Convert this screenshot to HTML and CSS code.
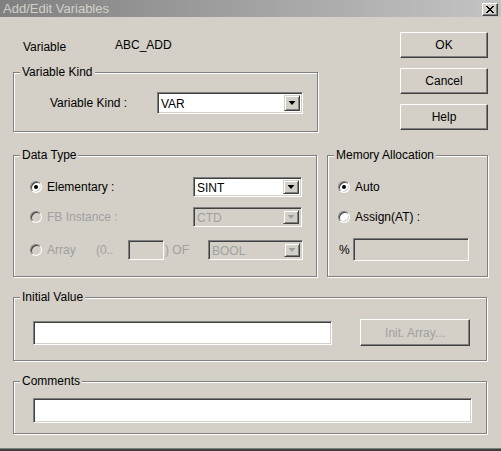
FILE: index.html
```html
<!DOCTYPE html>
<html>
<head>
<meta charset="utf-8">
<link rel="stylesheet" href="styles.css">
</head>
<body>
<div class="window">
  <div class="titlebar">
    <span class="title">Add/Edit Variables</span>
    <span class="close-btn">
      <svg width="8" height="7" viewBox="0 0 8 7" shape-rendering="crispEdges">
        <rect x="0" y="0" width="2" height="1"/><rect x="6" y="0" width="2" height="1"/>
        <rect x="1" y="1" width="2" height="1"/><rect x="5" y="1" width="2" height="1"/>
        <rect x="2" y="2" width="4" height="1"/>
        <rect x="3" y="3" width="2" height="1"/>
        <rect x="2" y="4" width="4" height="1"/>
        <rect x="1" y="5" width="2" height="1"/><rect x="5" y="5" width="2" height="1"/>
        <rect x="0" y="6" width="2" height="1"/><rect x="6" y="6" width="2" height="1"/>
      </svg>
    </span>
  </div>
  <div class="content">
    <div class="top">
      <div class="top-left">
        <div class="var-row">
          <span class="var-label">Variable</span>
          <span class="var-name">ABC_ADD</span>
        </div>
        <div class="group kind">
          <div class="legend">Variable Kind</div>
          <div class="kind-row">
            <span class="kind-label">Variable Kind :</span>
            <div class="combo w-kind"><span class="combo-text">VAR</span><span class="combo-btn"><span class="arrow"></span></span></div>
          </div>
        </div>
      </div>
      <div class="buttons">
        <button class="btn">OK</button>
        <button class="btn">Cancel</button>
        <button class="btn">Help</button>
      </div>
    </div>

    <div class="mid">
      <div class="group dtype">
        <div class="legend">Data Type</div>
        <div class="opt-row r1">
          <span class="radio checked"><span class="dot"></span></span>
          <span class="opt-label">Elementary :</span>
          <div class="combo w-dt"><span class="combo-text">SINT</span><span class="combo-btn"><span class="arrow"></span></span></div>
        </div>
        <div class="opt-row r2 disabled">
          <span class="radio"></span>
          <span class="opt-label">FB Instance :</span>
          <div class="combo w-dt off"><span class="combo-text">CTD</span><span class="combo-btn"><span class="arrow"></span></span></div>
        </div>
        <div class="opt-row r3 disabled">
          <span class="radio"></span>
          <span class="arr-label">Array</span>
          <span class="arr-open">(0..</span>
          <span class="field off small"></span>
          <span class="arr-of">) OF</span>
          <div class="combo w-bool off"><span class="combo-text">BOOL</span><span class="combo-btn"><span class="arrow"></span></span></div>
        </div>
      </div>
      <div class="group mem">
        <div class="legend">Memory Allocation</div>
        <div class="opt-row r1">
          <span class="radio checked"><span class="dot"></span></span>
          <span>Auto</span>
        </div>
        <div class="opt-row r2">
          <span class="radio"></span>
          <span>Assign(AT) :</span>
        </div>
        <div class="pct-row">
          <span class="pct">%</span>
          <span class="field off pct-field"></span>
        </div>
      </div>
    </div>

    <div class="group init">
      <div class="legend">Initial Value</div>
      <div class="init-row">
        <span class="field init-field"></span>
        <button class="btn btn-off">Init. Array...</button>
      </div>
    </div>

    <div class="group comments">
      <div class="legend">Comments</div>
      <div class="comments-row">
        <span class="field comments-field"></span>
      </div>
    </div>
  </div>
</div>
</body>
</html>
```

FILE: styles.css
```css
* { box-sizing: border-box; }

body {
  margin: 0;
  background: #d4d0c8;
  font-family: "Liberation Sans", Arial, sans-serif;
  font-size: 12px;
  line-height: 14px;
  color: #000;
}

.window {
  width: 501px;
  height: 451px;
  background: #d4d0c8;
  box-shadow: inset 0 -2px #404040, inset 0 -3px #808080;
}

.titlebar {
  height: 17px;
  background: linear-gradient(to right, #808080, #c4c4c4);
  display: flex;
  justify-content: space-between;
  align-items: flex-start;
  padding: 0 3px 0 3px;
}

.title {
  color: #d4d0c8;
  font-size: 13px;
  line-height: 17px;
}

.close-btn {
  margin-top: 3px;
  width: 16px;
  height: 13px;
  background: #d4d0c8;
  border: 1px solid;
  border-color: #fff #404040 #404040 #fff;
  box-shadow: inset -1px -1px #808080;
  display: flex;
  align-items: center;
  justify-content: center;
}

.content {
  padding-left: 13px;
}

.top { display: flex; }
.top-left { width: 305px; }

.var-row {
  display: flex;
  margin-top: 23px;
  height: 14px;
}
.var-label { margin-left: 10px; width: 92px; }
.var-name { margin-top: -2px; }

.group {
  border: 1px solid #808080;
  box-shadow: inset 1px 1px #fff, 1px 1px #fff;
}

.legend {
  width: fit-content;
  margin: -8px 0 0 6px;
  padding: 0 2px;
  background: #d4d0c8;
  line-height: 14px;
}

.kind { margin-top: 18px; height: 60px; }
.kind-row {
  display: flex;
  align-items: center;
  margin-top: 13px;
  padding-left: 36px;
}
.kind-label { width: 107px; }

.combo {
  display: flex;
  height: 22px;
  border: 1px solid;
  border-color: #808080 #fff #fff #808080;
  box-shadow: inset 1px 1px #404040, inset -1px -1px #d4d0c8;
  background: #fff;
  padding: 2px;
}
.combo-text {
  flex: 1;
  padding-left: 1px;
  line-height: 18px;
}
.combo-btn {
  width: 16px;
  border: 1px solid;
  border-color: #d4d0c8 #404040 #404040 #d4d0c8;
  box-shadow: inset 1px 1px #fff, inset -1px -1px #808080;
  background: #d4d0c8;
  display: flex;
  align-items: center;
  justify-content: center;
}
.arrow {
  width: 7px;
  height: 4px;
  background: #000;
  clip-path: polygon(0 0, 100% 0, 50% 100%);
}
.combo.off { background: #d4d0c8; color: #a0a0a0; }
.combo.off .arrow { background: #a0a0a0; }

.w-kind { width: 146px; }
.w-dt { width: 109px; height: 20px; }
.w-bool { width: 95px; height: 20px; }
.w-dt .combo-text, .w-bool .combo-text { line-height: 16px; }

.buttons {
  margin-left: 82px;
  margin-top: 15px;
  display: flex;
  flex-direction: column;
  gap: 10px;
}

.btn {
  width: 88px;
  height: 26px;
  padding: 0;
  margin: 0;
  font: inherit;
  color: #000;
  background: #d4d0c8;
  border: 1px solid;
  border-color: #fff #404040 #404040 #fff;
  box-shadow: inset -1px -1px #808080;
  text-align: center;
}

.mid {
  display: flex;
  margin-top: 23px;
}
.dtype { width: 304px; height: 122px; }
.mem { width: 161px; height: 122px; margin-left: 10px; }

.opt-row {
  display: flex;
  align-items: center;
  height: 20px;
}
.dtype .opt-row { padding-left: 16px; }
.mem .opt-row { padding-left: 10px; }
.r1 { margin-top: 15px; }
.r2 { margin-top: 10px; }
.r3 { margin-top: 13px; }

.disabled { color: #a0a0a0; }

.radio {
  flex: none;
  width: 12px;
  height: 12px;
  margin-right: 5px;
  border-radius: 50%;
  border: 1px solid;
  border-color: #808080 #fff #fff #808080;
  box-shadow: inset 1px 1px #404040, inset -1px -1px #d4d0c8;
  background: #fff;
  display: flex;
  align-items: center;
  justify-content: center;
}
.disabled .radio { background: #d4d0c8; }
.dot {
  width: 4px;
  height: 4px;
  border-radius: 50%;
  background: #000;
}

.opt-label { width: 146px; }
.arr-label { width: 49px; }
.arr-open { width: 32px; }
.arr-of { width: 44px; padding-left: 1px; }

.field {
  display: block;
  flex: none;
  border: 1px solid;
  border-color: #808080 #fff #fff #808080;
  box-shadow: inset 1px 1px #404040, inset -1px -1px #d4d0c8;
  background: #fff;
}
.field.off { background: #d4d0c8; }
.small { width: 36px; height: 20px; }

.pct-row {
  display: flex;
  align-items: center;
  margin-top: 11px;
  padding-left: 11px;
  height: 23px;
}
.pct { width: 14px; }
.pct-field { width: 116px; height: 23px; }

.init {
  margin-top: 20px;
  width: 474px;
  height: 64px;
}
.init-row {
  display: flex;
  align-items: center;
  margin-top: 15px;
  padding-left: 19px;
  height: 27px;
}
.init-field { width: 299px; height: 24px; }
.btn-off {
  width: 110px;
  height: 27px;
  margin-left: 28px;
  color: #a0a0a0;
}

.comments {
  margin-top: 20px;
  width: 474px;
  height: 53px;
}
.comments-row {
  margin-top: 10px;
  padding-left: 19px;
}
.comments-field { width: 439px; height: 25px; }
```
